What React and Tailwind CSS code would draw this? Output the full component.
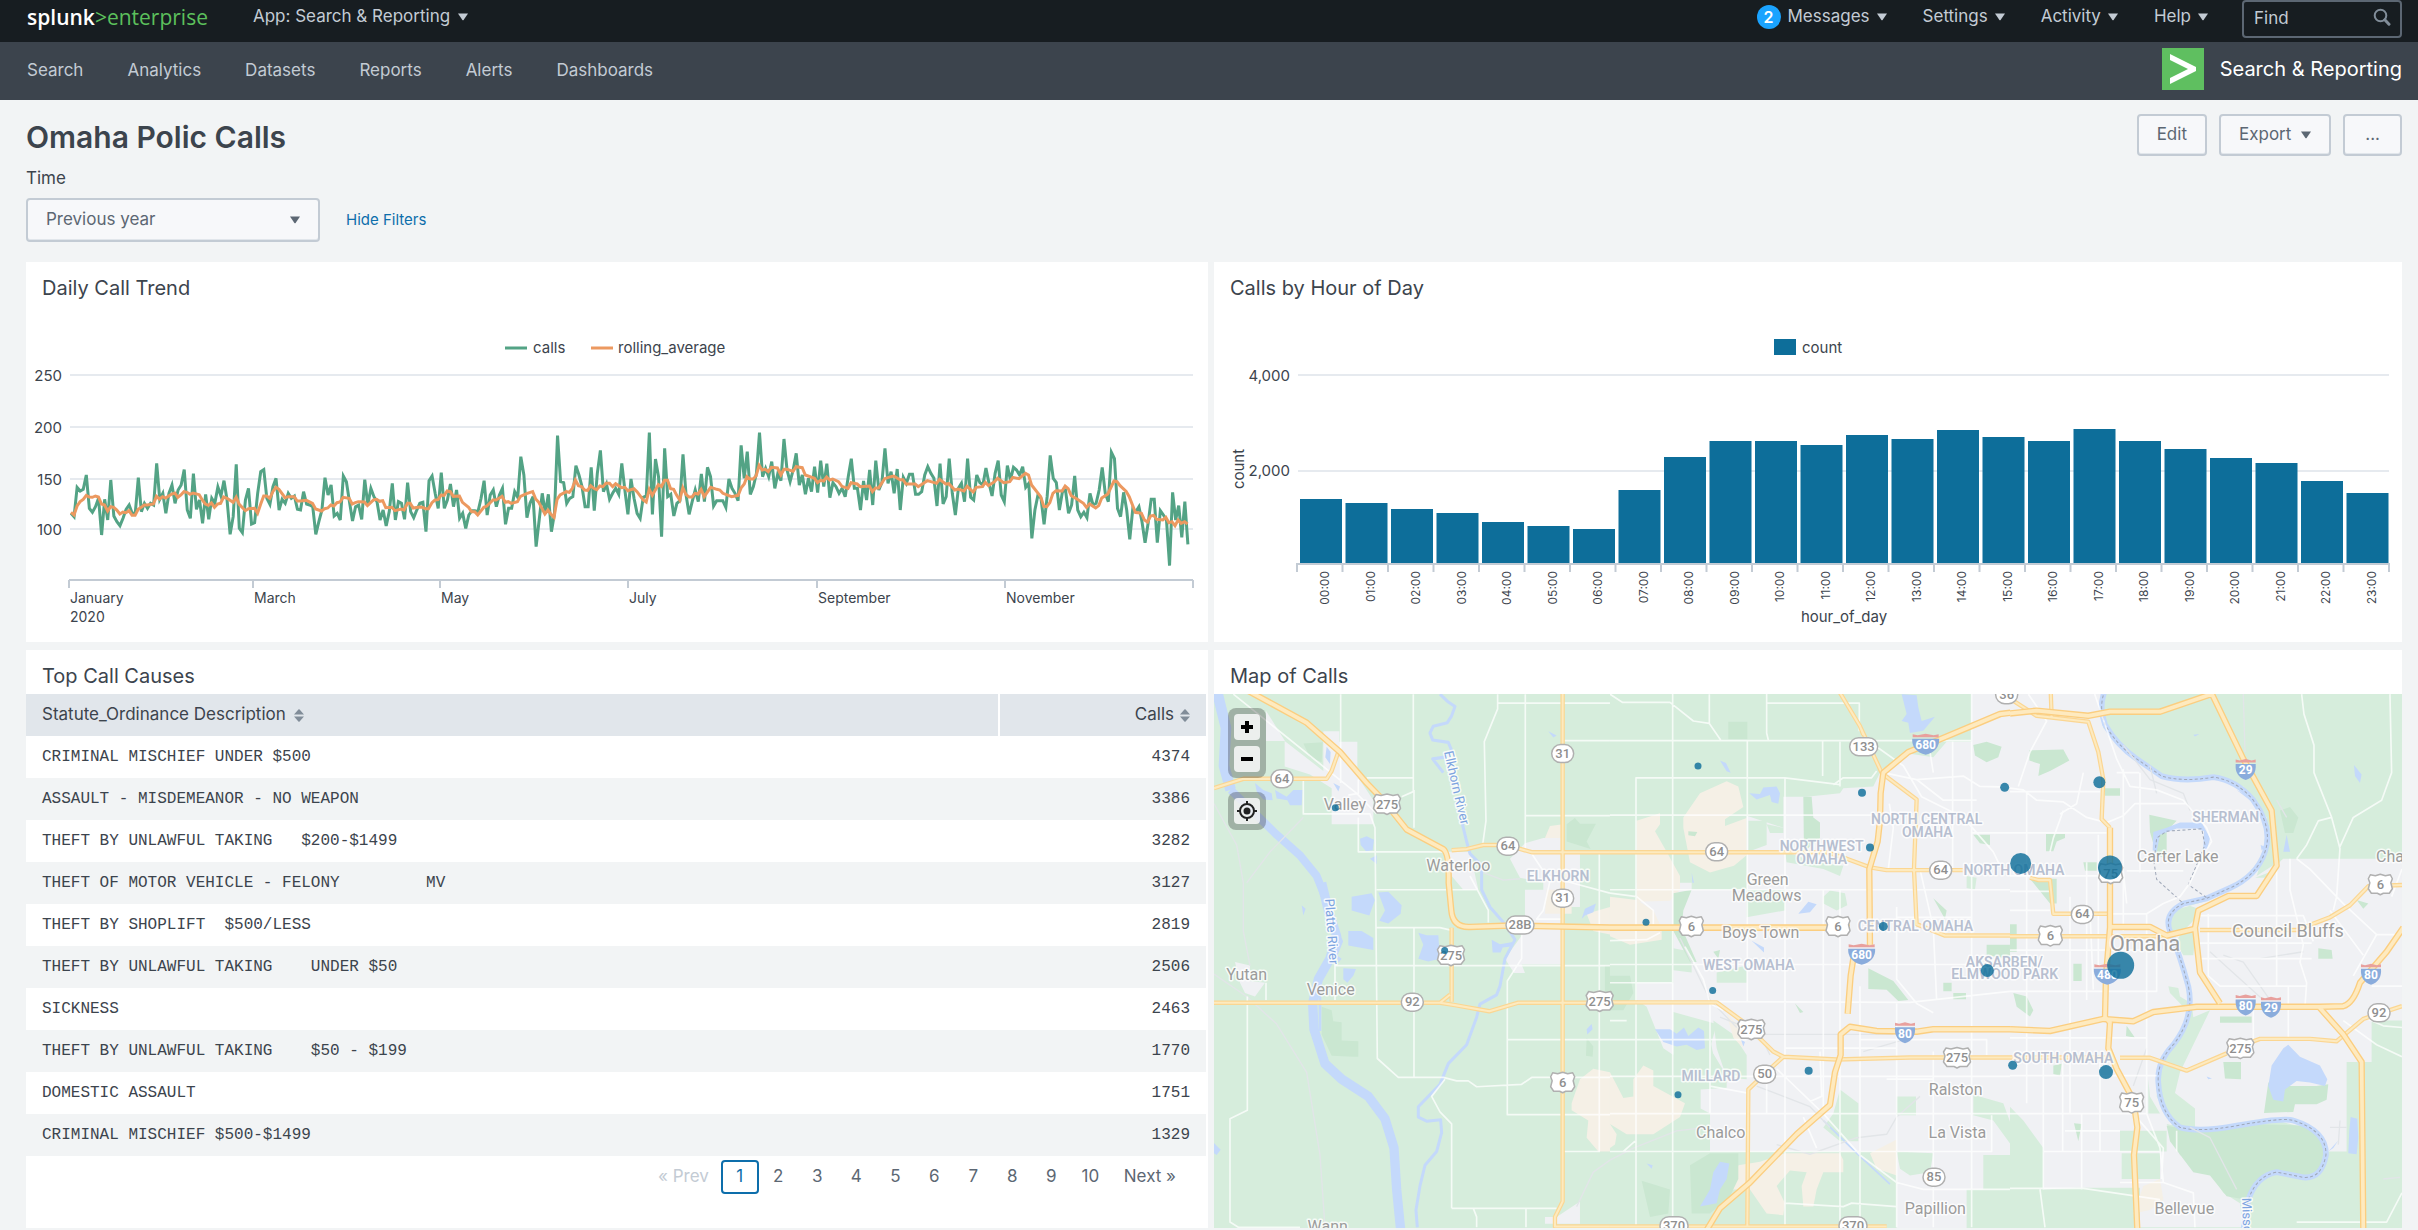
import React from "react";

const CALLS_H1 = [
  760, 770, 682, 693, 688, 645, 745, 757, 740, 715, 825, 718, 780, 660, 768, 785, 797, 775, 748, 735, 760, 760, 653, 755,
  730, 745, 730, 735, 610, 718, 700, 760, 700, 675, 730, 690, 675, 629, 750, 775, 641, 748, 720, 790, 703, 778, 715, 730,
  681, 708, 662, 720, 823, 770, 613, 805, 818, 720, 685, 792, 788, 700, 635, 629, 715, 733, 680, 655, 750, 718, 730, 700,
  715, 708, 748, 750, 695, 732, 735, 740, 823, 785, 750, 653, 705, 675, 768, 760, 780, 648, 665, 725, 783, 740, 735, 778,
  659, 735, 685, 710, 725, 780, 750, 798, 755, 670, 780, 725, 730, 778, 668, 755, 773, 750, 730, 727, 815, 662, 648, 700,
  745, 638, 745, 720, 672, 740, 690, 775, 760, 805, 765, 752, 752, 755, 715, 662, 765, 705, 690, 740, 705, 685, 793, 745,
  745, 695, 712, 590, 645, 773, 730, 710, 860, 780, 700, 760, 703, 815, 760, 527, 665, 668, 730, 715, 710, 617, 645, 680,
  740, 740, 622, 752, 640, 571, 695, 672,
];
const CALLS_H2 = [
  718, 700, 685, 703, 610, 690, 763, 657, 715, 760, 775, 712, 708, 518, 763, 597, 650, 830, 565, 710, 703, 768, 730, 722,
  583, 705, 763, 725, 690, 725, 642, 725, 622, 650, 738, 722, 722, 722, 742, 657, 685, 700, 722, 556, 655, 575, 703, 680,
  640, 518, 650, 625, 650, 605, 685, 640, 662, 537, 630, 665, 630, 580, 675, 645, 703, 655, 695, 620, 698, 602, 680, 611,
  713, 668, 680, 700, 685, 710, 650, 596, 685, 685, 750, 663, 720, 630, 735, 602, 690, 668, 565, 670, 635, 700, 627, 750,
  652, 670, 643, 643, 703, 703, 695, 645, 620, 640, 655, 738, 611, 732, 710, 596, 700, 765, 685, 670, 725, 596, 712, 720,
  645, 668, 675, 624, 670, 708, 640, 602, 705, 725, 617, 660, 622, 630, 645, 620, 682, 670, 835, 750, 705, 715, 793, 710,
  586, 655, 668, 750, 695, 690, 760, 735, 648, 750, 770, 757, 773, 700, 735, 730, 690, 622, 700, 725, 577, 596, 745, 770,
  697, 750, 838, 745, 755, 740, 785, 848, 790, 718, 718, 848, 752, 765, 780, 917, 697, 780, 737, 832, 725, 853,
];
const AVG_H1 =
  "131,757 139,765 147,738 155,725 163,718 171,706 179,711 187,712 195,708 203,711 211,732 219,735 227,753 235,740 243,742 251,750 259,762 267,756 275,758 283,752 291,766 299,766 307,748 315,742 323,735 331,735 347,732 355,709 363,717 371,710 379,714 387,708 395,702 403,699 411,712 419,705 427,695 435,697 443,703 451,699 467,704 475,720 483,732 491,736 499,729 507,742 515,732 523,730 531,711 540,715 556,727 564,712 572,733 588,752 596,746 612,745 620,760 628,733 636,708 644,708 652,715 660,695 668,682 676,688 692,713 700,710 716,710 724,723 732,723 748,721 764,730 772,747 788,753 796,746 804,744 812,735 820,738 828,728 836,726 844,712 860,715 868,732 876,728 884,725 900,726 908,737 924,720 932,718 940,724 948,722 956,743 972,742 980,752 996,747 1004,750 1013,730 1020,730 1028,744 1044,741 1052,742 1060,746 1068,746 1077,728 1085,720 1093,719 1101,705 1109,706 1117,693 1125,695 1133,709 1149,708 1157,727 1173,742 1181,755 1189,755 1197,765 1213,742 1221,738 1237,720 1245,720 1261,709 1269,727 1277,725 1285,730 1301,725 1309,709 1325,701 1341,695 1349,717 1357,727 1373,762 1381,750 1389,763 1397,772 1405,718 1413,705 1429,695 1437,697 1445,685 1453,660 1461,677 1469,680 1477,690 1485,691 1493,677 1501,685 1509,689 1517,678 1525,680 1533,670";
const AVG_H2 =
  "0,670 8,680 16,671 24,677 32,683 40,682 48,692 64,686 72,695 88,720 96,726 104,688 112,706 120,690 128,674 136,680 144,661 152,661 160,686 168,688 176,706 184,720 192,683 200,703 208,711 216,711 224,700 232,702 240,688 248,710 265,682 281,688 289,690 297,700 320,710 337,706 345,683 353,672 360,650 368,657 376,657 384,648 392,616 400,630 408,628 416,635 424,622 440,624 449,645 457,628 465,628 481,634 489,620 505,623 513,645 537,655 545,668 553,661 561,663 569,651 577,660 585,657 600,665 609,679 625,685 633,668 649,672 657,680 681,678 689,695 697,684 705,684 721,656 737,650 745,648 761,659 769,659 777,672 801,672 809,680 833,662 857,670 865,658 881,672 889,671 905,690 913,687 929,693 937,679 953,696 961,682 977,680 985,667 993,677 1009,665 1017,655 1033,668 1049,665 1057,652 1073,656 1090,640 1098,645 1106,675 1130,710 1138,739 1146,740 1154,728 1162,700 1170,692 1186,693 1194,678 1202,686 1210,707 1226,718 1242,730 1250,742 1258,732 1274,744 1282,737 1290,714 1306,702 1322,663 1330,665 1338,677 1354,694 1362,710 1378,757 1394,760 1402,780 1410,786 1418,768 1426,766 1434,778 1450,780 1458,772 1466,788 1474,785 1482,797 1490,780 1498,790 1507,785 1515,792";

const dayX = (d) => 45 + d * 3.06;
const valueY = (v) => v / 3 - 2;
const callPoints = [
  ...CALLS_H1.map((v, i) => [dayX((i / CALLS_H1.length) * 176), valueY(v)]),
  ...CALLS_H2.map((v, i) => [dayX(176 + (i / (CALLS_H2.length - 1)) * 189), valueY(v)]),
]
  .map((p) => p.join(","))
  .join(" ");
const avgPoints = [
  ...AVG_H1.split(" ").map((p) => {
    const [x, v] = p.split(",").map(Number);
    return [dayX((x - 131) / 8.02), valueY(v)];
  }),
  ...AVG_H2.split(" ").map((p) => {
    const [x, v] = p.split(",").map(Number);
    return [dayX(176 + x / 8.02), valueY(v)];
  }),
]
  .map((p) => p.join(","))
  .join(" ");

function Caret({ className = "" }) {
  return (
    <svg viewBox="0 0 10 8" aria-hidden="true" className={`h-2 w-2.5 shrink-0 fill-current ${className}`}>
      <path d="M0 0.5h10L5.6 7a.8.8 0 0 1-1.2 0z" />
    </svg>
  );
}

function SortIcon() {
  return (
    <svg viewBox="0 0 10 13" aria-hidden="true" className="h-[13px] w-2.5 shrink-0 fill-[#818d99]">
      <path d="M0 5.5 4.4.6a.8.8 0 0 1 1.2 0L10 5.5zM0 7.5h10l-4.4 4.9a.8.8 0 0 1-1.2 0z" />
    </svg>
  );
}

function TopBar() {
  return (
    <header className="flex h-[42px] items-start justify-between bg-[#171d21] pr-4 pl-[27px] text-[17px] text-[#c3cbd4]">
      <div className="flex h-[34px] items-center gap-[45px]">
        <a href="#home" className="flex items-center font-['Open_Sans',sans-serif] text-[21px] leading-8">
          <span className="font-semibold text-white">splunk</span>
          <span className="text-[#5cc05c]">&gt;enterprise</span>
        </a>
        <button type="button" className="flex items-center gap-2">
          App: Search &amp; Reporting <Caret />
        </button>
      </div>
      <div className="flex items-start">
        <nav className="flex h-[34px] items-center gap-9 pr-[34px]">
          <button type="button" className="flex items-center gap-[7px]">
            <span className="flex size-6 items-center justify-center rounded-full bg-[#1aa3ff] text-base font-semibold text-white">2</span>
            Messages <Caret />
          </button>
          <button type="button" className="flex items-center gap-[7px]">Settings <Caret /></button>
          <button type="button" className="flex items-center gap-[7px]">Activity <Caret /></button>
          <button type="button" className="flex items-center gap-[7px]">Help <Caret /></button>
        </nav>
        <label className="flex h-[38px] w-40 items-center justify-between rounded border-2 border-[#5c6773] pr-[9px] pl-2.5">
          <input
            aria-label="Find"
            placeholder="Find"
            className="w-24 bg-transparent text-[#c3cbd4] outline-none placeholder:text-[#c3cbd4]"
          />
          <svg viewBox="0 0 18 18" aria-hidden="true" className="mb-1 size-[18px] fill-none stroke-[#818d99]">
            <circle cx="7.5" cy="7.5" r="5.8" strokeWidth="2" />
            <path d="m11.8 11.8 4.2 4.4" strokeWidth="3" strokeLinecap="round" />
          </svg>
        </label>
      </div>
    </header>
  );
}

function AppBar() {
  return (
    <div className="flex h-[58px] items-center justify-between bg-[#3c444d] pr-4 pb-1 pl-[27px]">
      <nav className="flex gap-11 pt-1 text-[17px] text-[#c3cbd4]">
        {["Search", "Analytics", "Datasets", "Reports", "Alerts", "Dashboards"].map((t) => (
          <a key={t} href={`#${t.toLowerCase()}`}>{t}</a>
        ))}
      </nav>
      <a href="#app" className="flex items-center gap-4 text-xl text-white">
        <svg viewBox="0 0 42 42" aria-hidden="true" className="size-[42px]">
          <path fill="#5fbf60" d="M0 0h42v42H0z" />
          <path fill="#fff" d="M8 6v6l18 9L8 30v6l26-13v-4z" />
        </svg>
        Search &amp; Reporting
      </a>
    </div>
  );
}

const BUTTON = "flex h-[42px] items-center gap-2.5 rounded border-2 border-[#c3cbd4] bg-[#f7f8fa] text-[17px] text-[#5c6773] shadow-[inset_0_-1px_0_#e1e6eb]";

function Panel({ title, children }) {
  return (
    <section className="flex min-w-0 flex-col bg-white">
      <h2 className="px-4 pt-3 pb-1 text-[20px] leading-7 text-[#3c444d]">{title}</h2>
      {children}
    </section>
  );
}

function TrendChart() {
  const months = [
    [43, "January"], [227, "March"], [414, "May"], [602, "July"], [791, "September"], [979, "November"],
  ];
  return (
    <svg viewBox="0 44 1182 336" className="w-full font-['Inter',sans-serif] text-[15px]" role="img" aria-label="Daily Call Trend">
      <path d="M479 86h22" stroke="#53a385" strokeWidth="3" />
      <path d="M565 86h22" stroke="#ec9960" strokeWidth="3" />
      <g fill="#3c444d">
        <text x="507" y="91">calls</text>
        <text x="592" y="91">rolling_average</text>
      </g>
      {[[113, 250], [165, 200], [217, 150], [267, 100]].map(([y, t]) => (
        <g key={t}>
          <path d={`M44 ${y}h1123`} stroke="#e6eaef" strokeWidth="2" />
          <text x="36" y={y + 6} textAnchor="end" fill="#3c444d">{t}</text>
        </g>
      ))}
      <path d="M43 318h1124M1167 318v8" stroke="#c3cbd4" strokeWidth="2" fill="none" />
      {months.map(([x, t]) => (
        <g key={t}>
          <path d={`M${x} 318v8`} stroke="#c3cbd4" strokeWidth="2" />
          <text x={x + 1} y="341" fill="#3c444d" fontSize="14">{t}</text>
        </g>
      ))}
      <text x="44" y="360" fill="#3c444d" fontSize="14">2020</text>
      <polyline points={callPoints} fill="none" stroke="#53a385" strokeWidth="3" />
      <polyline points={avgPoints} fill="none" stroke="#ec9960" strokeWidth="3" />
    </svg>
  );
}

const HOUR_TOPS = [
  717, 730, 747, 759, 786, 798, 807, 690, 591, 543, 543, 555, 526, 538, 511, 531, 543, 507, 543, 567, 595, 610, 663, 699,
];

function HourChart() {
  return (
    <svg viewBox="0 44 1188 336" className="w-full font-['Inter',sans-serif] text-[15px]" role="img" aria-label="Calls by Hour of Day">
      <path d="M560 77h22v16h-22z" fill="#0d6e9a" />
      <g fill="#3c444d">
        <text x="588" y="91">count</text>
        <text x="76" y="119" textAnchor="end">4,000</text>
        <text x="76" y="214" textAnchor="end">2,000</text>
        <text x="630" y="360" textAnchor="middle">hour_of_day</text>
        <text transform="translate(30 207) rotate(-90)" textAnchor="middle">count</text>
      </g>
      <path d="M84 113h1091M84 209h1091" stroke="#e6eaef" strokeWidth="2" />
      {HOUR_TOPS.map((top, i) => {
        const y = Math.round(top / 3 - 2);
        const x = 83 + i * 45.5;
        return (
          <g key={i}>
            <path d={`M${x + 3} ${y}h42V302h-42z`} fill="#0d6e9a" />
            <path d={`M${x} 302v8`} stroke="#c3cbd4" strokeWidth="2" />
            <text transform={`translate(${x + 32} 309) rotate(-90)`} textAnchor="end" fill="#3c444d" fontSize="12">
              {String(i).padStart(2, "0")}:00
            </text>
          </g>
        );
      })}
      <path d="M82 302h1094M1175 302v8" stroke="#c3cbd4" strokeWidth="2" />
    </svg>
  );
}

const CAUSES = [
  ["CRIMINAL MISCHIEF UNDER $500", 4374],
  ["ASSAULT - MISDEMEANOR - NO WEAPON", 3386],
  ["THEFT BY UNLAWFUL TAKING   $200-$1499", 3282],
  ["THEFT OF MOTOR VEHICLE - FELONY         MV", 3127],
  ["THEFT BY SHOPLIFT  $500/LESS", 2819],
  ["THEFT BY UNLAWFUL TAKING    UNDER $50", 2506],
  ["SICKNESS", 2463],
  ["THEFT BY UNLAWFUL TAKING    $50 - $199", 1770],
  ["DOMESTIC ASSAULT", 1751],
  ["CRIMINAL MISCHIEF $500-$1499", 1329],
];

function CausesTable() {
  return (
    <div className="pr-0.5">
      <table className="w-full border-collapse text-[#3c444d]">
        <thead>
          <tr className="h-[42px] bg-[#e1e6eb] text-[17px]">
            <th scope="col" className="border-r-2 border-white px-4 text-left font-normal">
              <button type="button" className="flex items-center gap-2">Statute_Ordinance Description <SortIcon /></button>
            </th>
            <th scope="col" className="w-[207px] px-4 font-normal">
              <button type="button" className="ml-auto flex items-center gap-1.5">Calls <SortIcon /></button>
            </th>
          </tr>
        </thead>
        <tbody className="font-['Liberation_Mono',monospace] text-base">
          {CAUSES.map(([name, n]) => (
            <tr key={name} className="h-[42px] even:bg-[#f2f4f5]">
              <td className="px-4 whitespace-pre">{name}</td>
              <td className="px-4 text-right">{n}</td>
            </tr>
          ))}
        </tbody>
      </table>
      <nav aria-label="Pagination" className="flex h-[42px] items-center justify-end pr-4 text-[17px] text-[#5c6773]">
        <button type="button" disabled className="px-3 text-[#c3cbd4]">« Prev</button>
        {[1, 2, 3, 4, 5, 6, 7, 8, 9, 10].map((n) =>
          n === 1 ? (
            <button key={n} type="button" aria-current="page" className="h-[34px] w-[38px] rounded border-2 border-[#0d6eab] text-[#0d6eab]">1</button>
          ) : (
            <button key={n} type="button" className="h-[34px] w-[39px]">{n}</button>
          )
        )}
        <button type="button" className="pr-3.5 pl-3.5">Next »</button>
      </nav>
    </div>
  );
}

/* The map is drawn as three side-by-side sheets that share one scale. */
const SHEET_X = [-4, 396, 796];
const at = (s, x, y) => [SHEET_X[s] + x / 3, (y - 12) / 2.904];

const SHEETS = [
  {
    urban:
      "M168 60 225 148H168ZM224 148 340 235V120H388V150H442V250L490 320V390H365V285L300 245 224 222ZM705 470H780L805 580H760L725 540ZM900 490 945 445 1000 430H1060V470H1110V630H1060V797H935L945 822H912L885 780 945 700V580H1000V560L930 545ZM75 790 120 800V845L165 850 135 890 105 880 90 850ZM1110 1485V1550H1005V1530H1040Z",
    sand:
      "M1005 430 1020 395 1060 390V430ZM1010 580H1085V650H1005ZM1130 650 1200 630V710L1150 700ZM1085 1200 1110 1130 1150 1100 1200 1110V1340H1165L1130 1300 1135 1250 1085 1220Z",
    wood:
      "M1070 390 1095 372 1110 388 1158 388 1130 440 1142 462 1070 440ZM335 920 365 930 370 962 395 965V1018L445 1020V1065L430 1065 365 1062 335 1000ZM280 155 338 152 335 210 300 195ZM1130 1010 1150 1035 1148 1065 1128 1062ZM1185 800 1200 800V880H1185Z",
    water:
      "M425 600 485 590 495 610 478 655 425 640ZM505 588 535 586 575 625 572 650 535 678 508 670 525 640ZM415 700 455 700 490 720V755L415 742ZM625 705 650 712 685 712 690 780 655 788 625 780 640 740ZM845 725 870 738 908 732 905 745 878 748 872 762 848 762ZM400 808 438 810 430 830 412 850 400 840ZM450 432 470 425 492 435 488 465 468 468 452 450ZM350 165 362 180 360 215 346 195ZM195 290 230 310 250 290 278 290 275 335 240 335 232 320 200 315ZM135 270 160 290 185 300 188 320 160 318 140 295ZM12 1315 32 1335 20 1350 12 1345ZM275 625 287 635 280 655ZM1115 665 1125 635 1158 620 1150 645 1125 655ZM1130 985 1145 970 1148 985 1132 1000ZM1015 120 1040 132 1030 138ZM370 270 390 280 385 295ZM480 490 500 480 500 505ZM380 770 395 780 385 792Z",
    rivers: [
      ["M20 0 48 110 42 220 62 290", 32],
      ["M62 290 120 345 200 420 270 480 320 540 345 600", 24],
      ["M335 560 355 640 380 715 360 780 325 840 308 910 312 985 345 1085 395 1130 475 1180 525 1245 552 1330 560 1450 572 1568", 28],
      ["M345 620 395 730 370 790M330 840V990", 8],
      ["M690 12 715 35 735 48 725 75 712 95 670 105 660 125 668 145 715 152 725 175 705 195 668 200 700 240M755 380 770 440 780 475 815 510V580L840 630 885 680 915 725 885 780 870 860 860 885 810 912 800 950 770 1030 715 1085 690 1145 625 1210 625 1240 650 1252 692 1248 695 1285 680 1340 645 1380 630 1440 618 1510 622 1560", 9],
    ],
    rail: "M12 330 80 450 100 560V700L120 800M12 825 110 890 200 970 290 1110 330 1350 345 1560M280 370 180 470 110 560M820 530 880 552 930 548M1100 1500 1150 1400 1200 1365",
    white:
      "M70 12 440 300 500 360M392 12V270M610 12V295L575 310M612 290V400M863 12V55L823 150 828 380 818 450M863 38H1200M946 12V460M1060 147H1200M470 255H610M280 255V360H480L495 400 502 1070 565 1125H700L740 1135H775L800 1152 935 1145 965 1125H1200M445 370V470H700M445 260V300L415 305M500 580H800M500 690H690L722 697M612 690V1125M375 900V800H1200M946 365H1200M892 1015H1200M1200 1233H892V845L935 780V700M112 890V1220L60 1245V1545L85 1560H270M168 900V850M725 1505V1260L690 1225 665 1180 705 1130M725 1505H1040M790 1505 800 1530V1560M948 1505V1560M1060 1340H1170M1168 470V1340M780 540 835 640V675M965 475 1010 540 1200 590M1020 555 1000 640 980 665H1060",
    minor:
      "M12 285 100 258H350L365 235 385 180M725 465 770 462 820 450H880L925 460 965 471H1200M725 690V905M690 908 720 885M12 908H690L735 915 838 933 925 908H1200M1058 0V1485L1035 1530V1558H1200",
    major: "M110 0 290 95 390 180 470 270 520 320 590 405 700 462Q718 475 716 560L724 640Q728 690 780 688L900 684 1210 690",
  },
  {
    urban:
      "M410 365 520 400V310H590L690 300 700 285 790 280 815 230 900 185 970 195 1010 150H1085V0H1210V1568H860V1450L780 1400 690 1340H300V1230L272 1215V1160L350 1155V1120L300 1040 320 970 190 935V1060L160 1040 110 920 80 900V850L190 850V700L245 640V580L410 580ZM80 560H245V700H80Z",
    sand:
      "M220 370 270 300 350 265 385 280 400 340 345 375 345 395 410 372V480L372 510 300 530 240 500 230 450 220 400ZM80 380 150 358 150 390 135 410 170 470 210 540V580L180 612 80 615ZM0 600 80 610 130 640 155 690V725L60 740 0 715ZM100 1090 130 1105 130 1150 225 1200 210 1240 130 1290 50 1290 0 1260V1110L40 1185 70 1180 70 1130ZM0 1260 20 1290 15 1320 0 1330ZM385 1380 450 1370 525 1345H690L700 1365V1400L640 1400 620 1450 610 1500 580 1500 575 1440 590 1400 540 1395 500 1440 525 1490 520 1525 470 1520 420 1450 365 1450ZM780 1345 860 1305V1410L800 1390ZM350 940 380 970 400 1040 370 1010Z",
    park:
      "M470 390 520 400V415H480ZM640 600 660 582 705 590 712 625 680 640 640 620ZM415 380H470V450L415 470ZM525 470 620 500 700 510 690 540 640 520 530 500ZM640 180H720V265L640 250ZM80 850H150L160 810 245 820 245 760 190 750V700H80ZM310 960 370 1000 410 1060V1130L350 1125 320 1040ZM860 1180H918V1235H860ZM690 1160 745 1200V1310L690 1310 640 1270 670 1230ZM410 580H525V640L410 660ZM320 820 410 800V850H320ZM1120 1350H1210V1568H1070V1450H1120ZM860 1340 970 1345 960 1400 900 1410 870 1390ZM1070 540 1100 545 1095 580 1070 575ZM1090 1175 1180 1200 1210 1280V1330L1150 1250 1090 1235ZM190 1060 300 1010 320 1110 200 1120ZM525 1340H860V1450L700 1500 525 1490Z",
    wood:
      "M355 92H412V143H355ZM580 310 605 310 610 370 630 385V430L582 470ZM775 808 850 845 895 900 865 903 830 870 775 868ZM190 590 245 580 220 640 215 690 260 790 240 790 190 700ZM1090 160 1130 150 1175 165 1165 195 1130 210 1095 190ZM1090 420H1140V450L1110 445ZM1130 740H1200V780L1130 770ZM1000 850H1025V875H1000ZM1030 880H1068V898H1030ZM240 1380 300 1345H385V1420L360 1470 300 1520 245 1520ZM95 1425 180 1450 175 1520 120 1530ZM235 410 262 412 255 425 235 422ZM970 605 1010 640 1005 665ZM0 830 60 830 70 880 40 930 0 930ZM555 910 580 935 570 938ZM310 760 330 755 325 780Z",
    water:
      "M875 12 920 15 925 50 935 90 975 78 940 118 900 125 895 95 875 90 890 70ZM418 300 450 302 460 283 500 280 510 300 505 330 485 325 480 305 440 318ZM135 985 180 985 200 998 222 980 235 1005 265 980 282 990 285 1040 260 1045 230 1030 200 1035 160 1022ZM330 1370 358 1375 350 1420 330 1450 320 1490 270 1500 300 1450 310 1400ZM565 650 595 615 620 622 600 645ZM425 728 462 748 462 762ZM330 205 348 212 362 240 350 236ZM1128 890 1150 920ZM245 530 252 560 247 560ZM393 1015 405 1022 400 1035ZM110 1375 128 1380 125 1390Z",
    rivers: [["M640 1250 740 1345 840 1435", 5]],
    rail: "M0 1365 70 1330 200 1280 290 1270M330 950 460 1000 850 1000M440 1150 600 1210 660 1270M500 1320 600 1348 740 1300 830 1290 860 1240 930 1180M760 1050 900 1010M455 1010 480 1060M210 720 300 900 380 980",
    white:
      "M0 12 38 36H180L250 90 298 97 332 145M298 12V97M188 0V1560M470 0V125L475 145M470 38H748V120M0 147H1085M412 147V905M525 255V1560M78 1560V255H525L690 275M0 363H860M78 255V590M0 580H920M690 150V280M670 275 700 255H785L800 235M638 147V250M0 797H1200M320 905 900 907 920 905 1200 875M0 1015H410M0 1122H1200M525 1040 860 1040M860 1560V910M860 630V840L920 910 970 937M1085 0V1560M970 1050V1560M0 1230H1200M0 1340H1145V1235M525 1490 700 1500 725 1490 860 1500M640 580V1230M750 860V1560M800 165 880 220 935 310 1060 370 1150 470 1170 510M1028 150V520M920 260 1060 250 1110 280 1200 282M820 240 920 260 1000 320H1100M960 180 970 240M838 330 850 400 835 520M300 910V1230M190 850 0 850M690 580V1560M860 580H1200M860 660H1085M1085 415H1200M930 520 970 690 980 900M225 745 280 840 300 910 340 930M500 1100 640 1230 750 1350 860 1430 940 1450H1200M580 1240 620 1330M78 1340V1290M0 590 80 600 130 640V680M150 705 110 725 0 728M830 1130H970M750 1015H1130V1060M300 1150 410 1170M0 960 50 960M470 1120V1230M600 1195 635 1180 630 1050M40 1340 75 1310",
    minor:
      "M0 471H650L710 490 780 515 830 523H1060M820 245 920 318 912 520 920 680 1005 713H1210M750 105 760 130M685 0 750 105 815 240M0 907H320L395 960 490 1050 520 1065 680 1073 900 1067H1210M520 1065 480 1100 415 1160 412 1558M0 1558H830",
    major:
      "M0 690H720M1210 65 1170 70 985 145 895 180 820 240 812 300 810 380 803 440 778 520 780 740M730 780 722 830 713 940M1210 985H970L920 992 800 990 720 978 692 1000V1060L675 1110 660 1205 560 1290 420 1430 330 1505 290 1568",
  },
  {
    urban: "M-10 0H290L270 60 280 110 360 190 520 262 610 245 700 280 770 370 760 480 740 540 820 490H1176V1560H-10Z",
    sand: "M400 1440 450 1420 460 1480 420 1510 370 1520 385 1480Z",
    park:
      "M290 12H1180V488H820L770 545H735L805 520 790 370 710 250 610 240 530 262 450 248 350 170 275 90ZM520 700 560 690 550 770 520 770 490 720ZM475 860 505 865 510 890 545 910 550 950 600 930 510 1110 495 1170 555 1215V1270L490 1270 440 1180 450 1080 520 990 530 930 480 880ZM470 1260 560 1280 800 1250 900 1275 950 1340H1010V1080H1180V1568H700L690 1490 640 1460 600 1400 510 1350ZM-10 1345H100V1450L200 1445H390V1568H-10ZM330 1280H470V1340H330ZM335 1345H450V1420H335ZM1085 960H1180V1080H1085ZM-10 1200 40 1250 100 1330V1360H-10ZM415 1130 420 1180 450 1230 415 1230ZM520 620 600 610 490 640 480 690 490 740 520 700 580 640Z",
    wood:
      "M58 175 160 173 178 205 120 235 85 250 90 215 58 205ZM810 350 840 340 865 370 850 415 825 415ZM418 362 500 380 470 410 470 490 440 480 420 412ZM285 285H330V307H285ZM108 418H165V430L140 440 130 468H108ZM762 1228 775 1140 830 1150 920 1150 955 1145 950 1190 920 1203 855 1203 850 1225ZM640 1080H693V1130L645 1128ZM630 948H725V966H630ZM925 750 965 755 968 780H925ZM10 880 50 890 70 930 60 948 20 920ZM190 795H215V845H190ZM470 1265 560 1280 720 1260 890 1265 945 1320 930 1400 880 1415 790 1395 735 1430 710 1480 650 1470 600 1410 550 1400 480 1310ZM60 548H140V620H120ZM220 500H260V525L225 525ZM350 975 375 1010 348 1005ZM0 680H20V760H0ZM130 1090 155 1085 150 1120 130 1115ZM192 1258 215 1260 205 1310ZM1040 610 1075 620 1060 635Z",
    water:
      "M835 1030 870 1065 930 1090 952 1130 945 1150 900 1140 860 1135 825 1160 820 1195 790 1190 775 1150 785 1090 820 1040ZM430 412 470 400 510 385 575 385 600 430 590 470 580 460 582 410 560 402 500 402 450 420 440 470 428 465ZM1022 1240 1042 1245 1045 1300 1040 1348 1015 1345 1018 1280ZM830 420 840 470 820 470ZM1032 218 1055 245 1050 270 1035 250ZM550 130 568 128 555 135ZM590 1122 606 1128 595 1130ZM680 290 710 305 720 320ZM955 1340 985 1308 970 1330ZM752 450 765 455 755 466Z",
    rivers: [
      ["M285 0Q265 50 285 100 320 160 380 200L455 250Q520 268 610 253 680 262 730 320 790 400 765 470 740 540 660 575L590 605 520 620Q460 650 480 700 510 770 535 860 555 950 490 1030 440 1080 445 1140 450 1230 510 1270 570 1285 680 1265 820 1240 850 1250 950 1280 948 1350 935 1420 880 1415 L800 1400Q740 1410 715 1480L700 1568", 17],
    ],
    rail: "M340 160 420 260 520 300 540 350M600 760 760 900M620 780H750L880 760M540 1270 600 1300 680 1450M700 12 705 180M370 1150 410 1040M800 320 830 370M990 1250 985 1320M1120 1420 1170 1415M960 1270H1010M420 220 440 300M640 770 700 790 780 900",
    white:
      "M250 0 285 100 320 200 360 280 440 290 520 320 590 400 605 440 580 480 540 560 510 600 460 620 410 650V1230M0 285 40 290 80 320 160 325 230 370 290 385 340 365 375 330 530 330M55 12 110 90 60 180 25 280M50 293V1200M0 295H270M0 415H290M160 350 130 430 120 470M220 240 200 330 150 360M340 230V700M0 540H270M0 640H120M300 650H410L410 680M390 240V530M350 525H520M320 240H388M0 875H440V750M180 600V1230M0 1010H410M0 1120H440M0 1230H410L450 1330 460 1430 550 1460 555 1560M0 1447H220L450 1480M90 1450 105 1560M215 1230V1450M158 1080V1340M100 1050V1450M370 1230 460 1330 455 1420M165 1280H330M270 1080V1340M230 500V900M240 640 250 870M565 655H880L910 730M595 650V830L630 860H890M800 500V860M570 735H905M570 780L905 780M840 490V580L880 740 870 790 890 850 885 920M730 900V1015M835 860V1010M875 12 882 70 912 160V240L965 370 990 460 980 600 970 640M860 490 890 450 925 380 965 370M990 455 1030 370 1115 320 1145 240 1140 12M860 490 900 520 1000 620 1100 710 1030 830M1100 710H1176M960 640 1060 770M1085 860 1176 860M1000 960 1100 1030 1176 1065M1060 950 1120 975 1176 980M1145 600 1176 520M860 1545H1130L1176 1460M330 1430H460M100 1340H450M340 525 350 620M0 755H440M0 585H120M265 420V800M500 1280V1340",
    minor:
      "M0 25 80 75 235 92 265 180 280 260 275 375 300 400M122 0 125 80M300 400V700M60 545 85 552H120L130 650H300M0 715H480M570 697H860L960 660 1020 625 1075 570 1176 566M330 1068H420L530 1105 650 1055M730 1020 750 1013H900L980 1020 1060 955 1176 918M0 1067H300",
    major:
      "M0 68 80 60 235 75 300 63H450L610 10M600 0 700 200 785 350 800 510 740 598H655L565 640 555 690 570 820 630 910M300 400V690L288 830 285 950 300 965 295 1040 320 1100 370 1190 382 1270 372 1350 382 1568M300 688H420L470 713 560 692M0 985 120 990 280 955 370 962 430 935 560 920H930L1000 918Q1030 910 1050 850L1130 760 1180 690M925 918 1000 1000 1055 1080 1060 1568",
  },
];

const TOWNS = [
  [0, 405, 332, "Valley"], [0, 745, 510, "Waterloo"], [0, 110, 826, "Yutan"], [0, 362, 868, "Venice"], [0, 353, 1558, "Wann"],
  [1, 473, 548, "Green"], [1, 470, 595, "Meadows"], [1, 452, 703, "Boys Town"], [1, 332, 1284, "Chalco"],
  [1, 1037, 1160, "Ralston"], [1, 1042, 1284, "La Vista"], [1, 976, 1505, "Papillion"],
  [2, 503, 483, "Carter Lake"], [2, 1140, 483, "Cha"], [2, 523, 1505, "Bellevue"],
];
const DISTRICTS = [
  [0, 1044, 541, "ELKHORN"], [1, 950, 374, "NORTH CENTRAL"], [1, 952, 412, "OMAHA"], [1, 635, 454, "NORTHWEST"],
  [1, 635, 490, "OMAHA"], [1, 1212, 524, "NORTH OMAHA"], [1, 916, 687, "CENTRAL OMAHA"], [1, 416, 798, "WEST OMAHA"],
  [1, 1183, 790, "AKSARBEN/"], [1, 1184, 825, "ELMWOOD PARK"], [1, 303, 1120, "MILLARD"],
  [2, 647, 370, "SHERMAN"], [2, 160, 1069, "SOUTH OMAHA"],
];
const SHIELDS = [
  ["state", 0, 216, 258, "64"], ["state", 0, 1058, 185, "31"], ["state", 0, 894, 454, "64"], ["state", 0, 1058, 605, "31"],
  ["state", 0, 930, 683, "28B"], ["state", 0, 607, 907, "92"], ["us", 0, 531, 333, "275"], ["us", 0, 723, 772, "275"],
  ["us", 0, 1169, 905, "275"], ["us", 0, 1058, 1141, "6"],
  ["state", 1, 761, 165, "133"], ["state", 1, 320, 470, "64"], ["state", 1, 992, 524, "64"], ["state", 1, 464, 1116, "50"],
  ["state", 1, 972, 1415, "85"], ["state", 1, 192, 1556, "370"], ["state", 1, 729, 1556, "370"], ["state", 1, 1190, 14, "36"],
  ["us", 1, 244, 688, "6"], ["us", 1, 684, 688, "6"], ["us", 1, 424, 987, "275"], ["us", 1, 1041, 1069, "275"],
  ["int", 1, 947, 158, "680"], ["int", 1, 755, 768, "680"], ["int", 1, 885, 996, "80"],
  ["state", 2, 217, 652, "64"], ["state", 2, 1107, 938, "92"], ["us", 2, 121, 715, "6"], ["us", 2, 302, 534, "75"],
  ["us", 2, 365, 1200, "75"], ["us", 2, 691, 1042, "275"], ["us", 2, 1111, 566, "6"],
  ["int", 2, 707, 231, "29"], ["int", 2, 292, 826, "480"], ["int", 2, 707, 915, "80"], ["int", 2, 783, 922, "29"],
  ["int", 2, 1083, 826, "80"],
];
const MARKERS = [
  [0, 376, 342, 3.5], [0, 704, 757, 3.5], [1, 264, 221, 3.5], [1, 756, 299, 4], [1, 780, 458, 4], [1, 108, 675, 3.5],
  [1, 820, 687, 4.5], [1, 308, 873, 3.5], [1, 1132, 815, 6.5], [1, 596, 1106, 4], [1, 204, 1176, 3.5], [1, 1184, 283, 4.5],
  [2, 268, 268, 6], [2, 32, 504, 10.5], [2, 300, 516, 12], [2, 332, 800, 13.5], [2, 8, 1090, 4.5], [2, 288, 1110, 7],
];

function Shield({ kind, x, y, label }) {
  const wide = label.length > 2;
  const w = wide ? 14 : 11;
  if (kind === "int") {
    return (
      <g transform={`translate(${x} ${y})`}>
        <path
          d={wide ? "M-13-10 -8-9 0-10.500 8-9 13-10 13-7H-13Z" : "M-10-10 -6-9 0-10.500 6-9 10-10 10-7H-10Z"}
          fill="#e8a09d"
        />
        <path d={wide ? "M-13.500-5.500H13.500Q14 7 0 10.500-14 7-13.500-5.500Z" : "M-10-5.500H10Q11 7 0 10.500-11 7-10-5.500Z"} fill="#8aacdc" />
        <text y="5" textAnchor="middle" fontSize="12" fontWeight="700" fill="#fff">{label}</text>
      </g>
    );
  }
  return (
    <g transform={`translate(${x} ${y})`}>
      {kind === "state" ? (
        <rect x={-w} y="-9" width={w * 2} height="18" rx="9" fill="#fff" stroke="#b0b0b0" strokeWidth="1.5" />
      ) : (
        <path
          d={
            wide
              ? "M-11-10 -6-9 0-10.500 6-9 11-10 13.500-6 12-2 13.500 4 10 8.500 3 8.500 0 10-3 8.500-10 8.500-13.500 4-12-2-13.500-6Z"
              : "M-10-10 -5-9 0-10.500 5-9 10-10 12-6 10.500-2 12 4 9 8.500 3 8.500 0 10-3 8.500-9 8.500-12 4-10.500-2-12-6Z"
          }
          fill="#fff"
          stroke="#b0b0b0"
          strokeWidth="1.5"
          strokeLinejoin="round"
        />
      )}
      <text y="4" textAnchor="middle" fontSize="13" fontWeight="500" fill="#8f8f8f">{label}</text>
    </g>
  );
}

function CallMap() {
  const halo = { paintOrder: "stroke", stroke: "#fff", strokeOpacity: 0.8, strokeWidth: 3, strokeLinejoin: "round" };
  return (
    <div className="relative overflow-hidden">
      <svg viewBox="0 0 1188 534" className="block w-full bg-[#d6eddc] font-['Roboto',sans-serif]" role="img" aria-label="Map of Calls">
        <defs>
          {SHEETS.map((_, i) => (
            <clipPath key={i} id={`sheet-${i}`}>
              <path d={["M0 0H396V534H0Z", "M396 0H796V534H396Z", "M796 0H1188V534H796Z"][i]} />
            </clipPath>
          ))}
        </defs>
        {SHEETS.map((s, i) => (
          <g key={i} clipPath={`url(#sheet-${i})`}>
            <g transform={`translate(${SHEET_X[i]} -4) scale(0.3333 0.3444)`} fill="none" strokeLinejoin="round">
              <path d={s.urban} fill="#f0f1f4" />
              {s.park && <path d={s.park} fill="#d6eddc" />}
              <path d={s.sand} fill="#f5f0e6" />
              <path d={s.wood} fill="#cae7d1" />
              <path d={s.water} fill="#c4d9fb" />
              {s.rivers.map(([d, w]) => (
                <path key={d} d={d} stroke="#c4d9fb" strokeWidth={w} />
              ))}
              {i === 2 && (
                <g stroke="#9fa8b8" strokeWidth="3" strokeDasharray="9 7">
                  <path d={s.rivers[0][0]} />
                  <path d="M515 615 440 550 432 500 440 430 470 410 575 403 585 450 535 565 590 603" />
                </g>
              )}
              <path d={s.rail} stroke="#e2e5e8" strokeWidth="4" />
              <path d={s.white} stroke="#fff" strokeOpacity="0.75" strokeWidth="5" />
              <path d={s.minor} stroke="#fbd692" strokeWidth="13" />
              <path d={s.minor} stroke="#fdeabf" strokeWidth="6" />
              <path d={s.major} stroke="#fbce80" strokeWidth="19" />
              <path d={s.major} stroke="#feeabf" strokeWidth="11" />
            </g>
          </g>
        ))}
        {SHIELDS.map(([kind, s, px, py, label]) => {
          const [x, y] = at(s, px, py);
          return <Shield key={`${s}-${px}-${py}`} kind={kind} x={x} y={y} label={label} />;
        })}
        <g textAnchor="middle" fontSize="14" fontWeight="600" fill="#b7bfd0" {...halo}>
          {DISTRICTS.map(([s, px, py, t]) => {
            const [x, y] = at(s, px, py);
            return <text key={`${t}${px}`} x={x} y={y + 5}>{t}</text>;
          })}
        </g>
        <g textAnchor="middle" fontSize="16" fill="#9b9b9b" {...halo}>
          {TOWNS.map(([s, px, py, t]) => {
            const [x, y] = at(s, px, py);
            return <text key={t} x={x} y={y + 6}>{t}</text>;
          })}
          <text x="931" y="257" fontSize="22">Omaha</text>
          <text x="1074" y="243" fontSize="18">Council Bluffs</text>
        </g>
        <g fontSize="13" fill="#7da4e0" {...halo}>
          <text transform="translate(230 58) rotate(77)">Elkhorn River</text>
          <text transform="translate(111 205) rotate(86)">Platte River</text>
          <text transform="translate(1028 504) rotate(88)">Missouri River</text>
        </g>
        <g fill="#0d6e9a" fillOpacity="0.82">
          {MARKERS.map(([s, px, py, r]) => {
            const [x, y] = at(s, px, py);
            return <circle key={`${px}-${py}`} cx={x} cy={y} r={r} />;
          })}
        </g>
      </svg>
      <div className="absolute top-3.5 left-3.5 flex flex-col gap-3.5">
        <div className="flex flex-col gap-1.5 rounded-lg bg-black/25 p-1.5">
          <button type="button" aria-label="Zoom in" className="flex size-[26px] items-center justify-center rounded bg-white/80">
            <svg viewBox="0 0 12 12" className="size-3"><path d="M4 0h4v4h4v4H8v4H4V8H0V4h4z" /></svg>
          </button>
          <button type="button" aria-label="Zoom out" className="flex size-[26px] items-center justify-center rounded bg-white/80">
            <svg viewBox="0 0 12 12" className="size-3"><path d="M0 4h12v4H0z" /></svg>
          </button>
        </div>
        <div className="rounded-lg bg-black/25 p-1.5">
          <button type="button" aria-label="Reset view" className="flex size-[26px] items-center justify-center rounded bg-white/80">
            <svg viewBox="0 0 20 20" className="size-5 fill-none stroke-[#222]" strokeWidth="2">
              <circle cx="10" cy="10" r="7" />
              <circle cx="10" cy="10" r="2.500" fill="#222" />
              <path d="M10 0v4M10 16v4M0 10h4M16 10h4" />
            </svg>
          </button>
        </div>
      </div>
    </div>
  );
}

export default function App() {
  return (
    <div className="min-h-screen bg-[#f2f4f5] font-['Inter',sans-serif]">
      <TopBar />
      <AppBar />
      <main className="pt-3.5 pr-4 pl-[26px]">
        <div className="flex items-start justify-between">
          <h1 className="text-[30px] leading-[46px] font-semibold text-[#3c444d]">Omaha Polic Calls</h1>
          <div className="flex gap-3">
            <button type="button" className={`${BUTTON} px-[18px]`}>Edit</button>
            <button type="button" className={`${BUTTON} px-[18px]`}>Export <Caret /></button>
            <button type="button" aria-label="More actions" className={`${BUTTON} px-5`}>...</button>
          </div>
        </div>
        <form className="mt-1.5">
          <label htmlFor="time" className="block text-[17px] leading-6 text-[#3c444d]">Time</label>
          <div className="mt-2 flex items-center gap-[26px]">
            <div className="relative">
              <select
                id="time"
                className="h-11 w-[294px] appearance-none rounded border-2 border-[#c3cbd4] bg-[#f7f8fa] pl-[18px] text-[17px] text-[#5c6773] shadow-[inset_0_-1px_0_#e1e6eb]"
              >
                <option>Previous year</option>
              </select>
              <Caret className="pointer-events-none absolute top-[18px] right-5 text-[#5c6773]" />
            </div>
            <a href="#filters" className="text-[15px] text-[#0d6eab]">Hide Filters</a>
          </div>
        </form>
        <div className="mt-5 grid grid-cols-[1182fr_1188fr] gap-x-1.5 gap-y-2">
          <Panel title="Daily Call Trend"><TrendChart /></Panel>
          <Panel title="Calls by Hour of Day"><HourChart /></Panel>
          <Panel title="Top Call Causes"><CausesTable /></Panel>
          <Panel title="Map of Calls"><CallMap /></Panel>
        </div>
      </main>
    </div>
  );
}
